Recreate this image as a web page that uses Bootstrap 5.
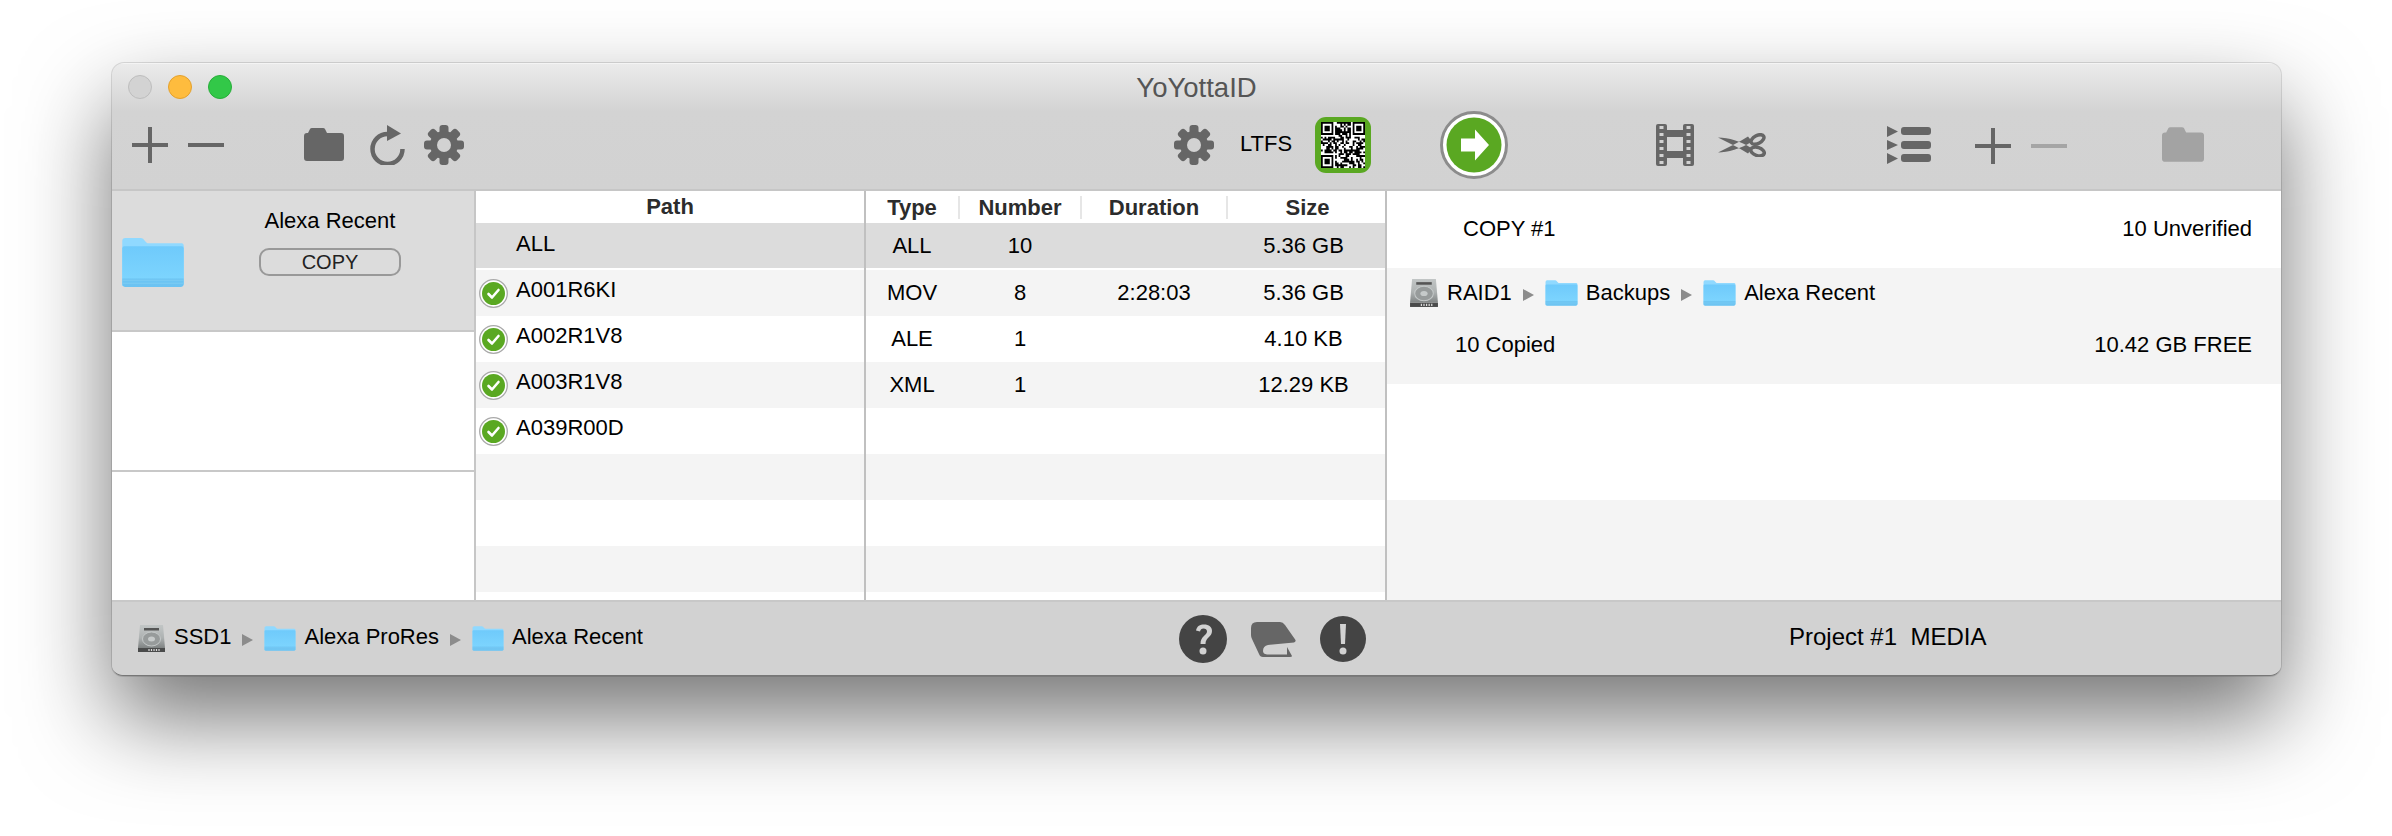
<!doctype html>
<html lang="en">
<head>
<meta charset="utf-8">
<title>YoYottaID</title>
<link href="https://cdn.jsdelivr.net/npm/bootstrap@5.3.0/dist/css/bootstrap.min.css" rel="stylesheet">
<style>
html,body{height:836px;overflow:hidden;background:#fff}
body{font-family:"Liberation Sans",Arial,sans-serif;font-size:22px;color:#000;padding:63px 0 0 112px;line-height:1.2}
.win{width:2169px;height:613px;border-radius:12px 12px 11px 11px;overflow:hidden;background:#d2d2d2;box-shadow:0 42px 90px rgba(0,0,0,.55),0 0 0 1px rgba(0,0,0,.12);border-bottom:1px solid #777}
.chrome{height:128px;background:linear-gradient(#ebebeb,#d3d3d3 48px,#d2d2d2);border-bottom:2px solid #c6c6c6;border-top:1px solid #f4f4f4}
.titlerow{height:46px;display:grid;grid-template-columns:1fr auto 1fr;align-items:center;padding:0 16px}
.wintitle{font-size:27.5px;color:#555}
.light{width:24px;height:24px;border-radius:50%;border:1px solid}
.l1{background:#d3d3d3;border-color:#bdbdbd}.l2{background:#febc3e;border-color:#e3a02e}.l3{background:#32c848;border-color:#28ad3a}
.lights{gap:16px}
.tools{height:79px;padding:0 0 10px 20px}
.tools svg,.bar svg{display:block;flex:none}
.g19{margin-left:19px}.g20{margin-left:20px}.g23{margin-left:23px}.g24{margin-left:24px}.g26{margin-left:26px}.g44{margin-left:44px}.g69{margin-left:69px}.g80{margin-left:80px}.g95{margin-left:95px}.g121{margin-left:121px}.g148{margin-left:148px}.g710{margin-left:710px}
.low{margin-top:3px}
.qrbox{width:56px;height:56px;border-radius:11px;background:#5aa822;padding:5px 6px}
.main{height:409px;background:#fff}
.side{width:364px;border-right:2px solid #c6c6c6;flex:none}
.slot{height:140px;border-bottom:2px solid #c8c8c8;background:#fff}
.slot:last-child{border-bottom:0;flex:1}
.slot.on{height:141px;background:#dcdcdc;padding:17px 0 0 9px}
.slotfolder{margin-top:30px}
.slotbody{width:142px;margin-left:74px}
.slotname{text-align:center;margin-bottom:14px;white-space:nowrap;margin-left:-20px;margin-right:-20px}
.pill{display:block;width:142px;height:28px;padding:0;border:2px solid #999;border-radius:10px;background:transparent;font-size:20px;line-height:24px;color:#222;--bs-btn-hover-bg:transparent}
.pathcol{width:390px;border-right:2px solid #c0c0c0;flex:none}
.statcol{width:521px;border-right:2px solid #c0c0c0;flex:none}
.hd{height:32px;font-weight:700;color:#2c2c2c;font-size:22px}
.rw{height:46px}
.rw.sel{height:45px;background:#dcdcdc;margin-bottom:2px}
.rw.sel.stats{padding-top:2px}
.rw.alt{background:#f4f4f4}
.pathrow{padding:0 0 5px 3px}
.pathrow.sel{padding-bottom:3px}
.pathrow svg{margin-top:5px;flex:none}
.pathtext{margin-left:8px}
.pathtext.noicon{margin-left:37px}
.stats{display:grid;grid-template-columns:94px 122px 146px 159px;align-items:center;text-align:center}
.stats>div{padding-right:2px}
.stats>div:last-child{padding-right:8px}
.hd.stats>div{height:23px;line-height:23px;border-right:2px solid #e6e6e6;padding:0}
.hd.stats>div:last-child{border-right:0}
.rightcol{flex:1;min-width:0}
.rblock{height:77px;padding:0 29px 0 76px}
.rblock.two{height:116px;background:#f4f4f4;padding:0 29px 0 22px;display:flex;flex-direction:column}
.rblock.three{height:116px;background:#fff}
.rblock.four{height:100px;background:#f4f4f4}
.crumbs{height:48px;padding-top:2px}
.copied{padding:16px 0 0 46px}
.crumb-t{margin-left:8px;white-space:nowrap}
.arrow{width:0;height:0;border-left:11px solid #8c8c8c;border-top:6.5px solid transparent;border-bottom:6.5px solid transparent;margin:4px 11px 0 11px;flex:none}
.bar{height:75px;background:#d2d2d2;border-top:2px solid #c8c8c8;padding-left:25px}
.bar-left{width:1042px}
.bar-mid{width:600px;gap:24px;padding-top:1px}
.bar .crumb-t,.project{padding-bottom:3px}
.project{font-size:24px;white-space:nowrap;margin-left:10px}
</style>
</head>
<body>
<svg width="0" height="0" class="d-block" aria-hidden="true">
 <defs>
  <linearGradient id="fg" x1="0" y1="0" x2="0" y2="1"><stop offset="0" stop-color="#6fcafb"/><stop offset=".78" stop-color="#7cd4fe"/><stop offset=".8" stop-color="#6cc5f3"/><stop offset="1" stop-color="#6cc3f2"/></linearGradient>
  <linearGradient id="hg" x1="0" y1="0" x2="0" y2="1"><stop offset="0" stop-color="#c2c6c6"/><stop offset=".55" stop-color="#aeb2b2"/><stop offset="1" stop-color="#7f8383"/></linearGradient>
  <symbol id="folder" viewBox="0 0 61 47">
   <path d="M1 46V3Q1 0 4 0H19Q21 0 23 3L25 5H58Q60 5 60 8V44Q60 46 58 46Z" fill="#90d9ff"/>
   <path d="M1 44V10Q1 8 3 8H58Q60 8 60 10V44Q60 47 57 47H4Q1 47 1 44Z" fill="url(#fg)"/>
   <path d="M1 40.500H60M1 43.500H60" stroke="#84d0f5" stroke-width="1" opacity=".7"/>
  </symbol>
  <symbol id="hdd" viewBox="0 0 29 29">
   <path d="M3 1H26L28 24H1Z" fill="url(#hg)"/>
   <rect x="1" y="24" width="27" height="4" fill="#4a4b4b"/>
   <path d="M7 4H22V6.500H7Z" fill="#555"/>
   <ellipse cx="14.500" cy="15" rx="9" ry="7" fill="#979b9b" stroke="#c4c8c8" stroke-width="1"/>
   <ellipse cx="14.500" cy="15" rx="3.500" ry="2.500" fill="#c6caca"/>
   <path d="M12 25v2M14.500 25v2M17 25v2M19.500 25v2M22 25v2" stroke="#ddd" stroke-width="1.200"/>
  </symbol>
  <symbol id="check" viewBox="0 0 29 29">
   <circle cx="14.500" cy="14.500" r="13.800" fill="#fff" stroke="#a9a9a9" stroke-width="1.300"/>
   <circle cx="14.500" cy="14.500" r="11.500" fill="#5aa822"/>
   <path d="M9.500 15l3.500 3.500 6.500-7.500" fill="none" stroke="#fff" stroke-width="2.600" stroke-linecap="round" stroke-linejoin="round"/>
  </symbol>
  <symbol id="gear" viewBox="0 0 40 40">
   <g fill="#666"><rect x="15.500" y="0" width="9" height="40" rx="3"/><rect x="15.500" y="0" width="9" height="40" rx="3" transform="rotate(45 20 20)"/><rect x="15.500" y="0" width="9" height="40" rx="3" transform="rotate(90 20 20)"/><rect x="15.500" y="0" width="9" height="40" rx="3" transform="rotate(135 20 20)"/></g>
   <circle cx="20" cy="20" r="10.500" fill="none" stroke="#666" stroke-width="7"/>
   <circle cx="20" cy="20" r="7" fill="#d2d2d2"/>
  </symbol>
  <symbol id="plus" viewBox="0 0 36 36"><path d="M16 0h4v16h16v4H20v16h-4V20H0v-4h16z" fill="#666"/></symbol>
  <symbol id="tfolder" viewBox="0 0 40 33"><path d="M0 8Q0 5 3 5H4L6 1Q6.500 0 8 0H19Q20.500 0 21 1L23 5H37Q40 5 40 8V30Q40 33 37 33H3Q0 33 0 30Z"/></symbol>
 </defs>
</svg>

<div class="win d-flex flex-column">
 <div class="chrome">
  <div class="titlerow">
   <div class="d-flex lights"><span class="light l1"></span><span class="light l2"></span><span class="light l3"></span></div>
   <div class="wintitle">YoYottaID</div>
   <div></div>
  </div>
  <div class="tools d-flex align-items-center">
   <svg width="36" height="36"><use href="#plus"/></svg>
   <svg class="g20" width="36" height="4"><rect width="36" height="4" fill="#666"/></svg>
   <svg class="g80" width="40" height="33" fill="#666"><use href="#tfolder"/></svg>
   <svg class="g26" width="35" height="40" viewBox="0 0 35 40"><path d="M17.500 9A15 15 0 1 0 32.500 24" fill="none" stroke="#666" stroke-width="4.500"/><path d="M17 0L31 8.500 17 16Z" fill="#666"/></svg>
   <svg class="g19" width="40" height="40"><use href="#gear"/></svg>
   <svg class="g710" width="40" height="40"><use href="#gear"/></svg>
   <span class="g26">LTFS</span>
   <div class="qrbox g23"><svg id="qr" width="44" height="46" viewBox="0 0 25 25" preserveAspectRatio="none"><rect width="25" height="25" fill="#fff"/><path id="qrp" fill="#000" d=""/></svg></div>
   <svg class="g69" width="68" height="68" viewBox="0 0 68 68"><circle cx="34" cy="34" r="32.500" fill="#fff" stroke="#8c8c8c" stroke-width="3"/><circle cx="34" cy="34" r="27.500" fill="#5aa822"/><path d="M21 27.500H35V18.500L49 34 35 49.500V40.500H21Z" fill="#fff"/></svg>
   <svg class="g148" width="38" height="42" viewBox="0 0 38 42"><g fill="#666"><rect width="11" height="42" rx="2"/><rect x="27" width="11" height="42" rx="2"/><rect x="10" y="6" width="18" height="7"/><rect x="10" y="27" width="18" height="7"/></g><path fill="#d2d2d2" d="M3.500 2h4v3h-4zM3.500 9h4v3h-4zM3.500 16h4v3h-4zM3.500 23h4v3h-4zM3.500 30h4v3h-4zM3.500 37h4v3h-4zM30.500 2h4v3h-4zM30.500 9h4v3h-4zM30.500 16h4v3h-4zM30.500 23h4v3h-4zM30.500 30h4v3h-4zM30.500 37h4v3h-4z"/></svg>
   <svg class="g24" width="48" height="24" viewBox="0 0 48 24"><path d="M0 4.500C11 4.500 22 8 34 15.500L30 20.500C20 14 10 9.500 0 4.500ZM0 19.500C10 19.500 22 16 34 8.500L30 3.500C20 10 10 14.500 0 19.500Z" fill="#666"/><g fill="none" stroke="#666" stroke-width="3.500"><ellipse cx="39.500" cy="6.500" rx="7" ry="4" transform="rotate(-28 39.500 6.500)"/><ellipse cx="39.500" cy="18.500" rx="7" ry="4" transform="rotate(18 39.500 18.500)"/></g></svg>
   <svg class="g121" width="44" height="38" viewBox="0 0 44 38"><g fill="#666"><path d="M0 0L11 5.500 0 11ZM0 14L11 19 0 24ZM0 27L11 32.500 0 38Z"/><rect x="14" y="1" width="30" height="8" rx="3"/><rect x="14" y="15" width="30" height="8" rx="3"/><rect x="14" y="28" width="30" height="8" rx="3"/></g></svg>
   <svg class="g44 low" width="36" height="36"><use href="#plus"/></svg>
   <svg class="g20 low" width="36" height="4"><rect width="36" height="4" fill="#a5a5a5"/></svg>
   <svg class="g95" width="42" height="35" fill="#a3a3a3"><use href="#tfolder"/></svg>
  </div>
 </div>

 <div class="main d-flex">
  <div class="side d-flex flex-column">
   <div class="slot on d-flex">
    <svg class="slotfolder" width="64" height="49"><use href="#folder"/></svg>
    <div class="slotbody">
     <div class="slotname">Alexa Recent</div>
     <button type="button" class="btn pill">COPY</button>
    </div>
   </div>
   <div class="slot"></div>
   <div class="slot"></div>
  </div>

  <div class="pathcol overflow-hidden">
   <div class="hd d-flex align-items-center justify-content-center">Path</div>
   <div class="rw sel pathrow d-flex align-items-center"><span class="pathtext noicon">ALL</span></div>
   <div class="rw alt pathrow d-flex align-items-center"><svg width="29" height="29"><use href="#check"/></svg><span class="pathtext">A001R6KI</span></div>
   <div class="rw pathrow d-flex align-items-center"><svg width="29" height="29"><use href="#check"/></svg><span class="pathtext">A002R1V8</span></div>
   <div class="rw alt pathrow d-flex align-items-center"><svg width="29" height="29"><use href="#check"/></svg><span class="pathtext">A003R1V8</span></div>
   <div class="rw pathrow d-flex align-items-center"><svg width="29" height="29"><use href="#check"/></svg><span class="pathtext">A039R00D</span></div>
   <div class="rw alt"></div>
   <div class="rw"></div>
   <div class="rw alt"></div>
  </div>

  <div class="statcol overflow-hidden">
   <div class="hd stats"><div>Type</div><div>Number</div><div>Duration</div><div>Size</div></div>
   <div class="rw sel stats"><div>ALL</div><div>10</div><div></div><div>5.36 GB</div></div>
   <div class="rw alt stats"><div>MOV</div><div>8</div><div>2:28:03</div><div>5.36 GB</div></div>
   <div class="rw stats"><div>ALE</div><div>1</div><div></div><div>4.10 KB</div></div>
   <div class="rw alt stats"><div>XML</div><div>1</div><div></div><div>12.29 KB</div></div>
   <div class="rw"></div>
   <div class="rw alt"></div>
   <div class="rw"></div>
   <div class="rw alt"></div>
  </div>

  <div class="rightcol">
   <div class="rblock d-flex align-items-center justify-content-between"><span>COPY #1</span><span>10 Unverified</span></div>
   <div class="rblock two">
    <div class="crumbs d-flex align-items-center">
     <svg width="30" height="30"><use href="#hdd"/></svg><span class="crumb-t">RAID1</span><span class="arrow"></span>
     <svg width="33" height="26"><use href="#folder"/></svg><span class="crumb-t">Backups</span><span class="arrow"></span>
     <svg width="33" height="26"><use href="#folder"/></svg><span class="crumb-t">Alexa Recent</span>
    </div>
    <div class="copied d-flex justify-content-between"><span>10 Copied</span><span>10.42 GB FREE</span></div>
   </div>
   <div class="rblock three"></div>
   <div class="rblock four"></div>
  </div>
 </div>

 <div class="bar d-flex align-items-center">
  <div class="bar-left d-flex align-items-center">
   <svg width="29" height="29"><use href="#hdd"/></svg><span class="crumb-t">SSD1</span><span class="arrow"></span>
   <svg width="32" height="25"><use href="#folder"/></svg><span class="crumb-t">Alexa ProRes</span><span class="arrow"></span>
   <svg width="32" height="25"><use href="#folder"/></svg><span class="crumb-t">Alexa Recent</span>
  </div>
  <div class="bar-mid d-flex align-items-center">
   <svg width="48" height="48" viewBox="0 0 48 48"><circle cx="24" cy="24" r="24" fill="#444"/><path d="M17 15.500C18 11 21 9.500 25 9.500 30 9.500 33 12 33 16 33 22 26.500 22.500 26.500 29H21.500C21.500 21 28 20.500 28 16.500 28 14.500 26.500 13.500 24.500 13.500 22.500 13.500 21.500 14.800 21 16.500Z" fill="#d2d2d2"/><circle cx="24" cy="36" r="3.500" fill="#d2d2d2"/></svg>
   <svg width="45" height="37" viewBox="0 0 45 37"><path fill="#666" d="M6 1H29Q32 1 34 4L44.500 19Q45 21 43 21.500L17 24Q12 25 12 30 12 33 16 33.500H36L36 26 41 35Q41 36 39 36H12Q9 36 8 33L1 18Q0 16 0 14V7Q0 1 6 1Z"/></svg>
   <svg width="46" height="46" viewBox="0 0 46 46"><circle cx="23" cy="23" r="23" fill="#444"/><path d="M20 8H26L25 28H21Z" fill="#d2d2d2"/><circle cx="23" cy="35" r="3.500" fill="#d2d2d2"/></svg>
  </div>
  <span class="project">Project #1&nbsp;&nbsp;MEDIA</span>
 </div>
</div>
<script>
(function(){
 var n=25,seed=12345,d='';
 function r(){seed=(seed*1103515245+12345)&0x7fffffff;return (seed>>12)%100;}
 function inF(x,y){return (x<8&&y<8)||(x>=n-8&&y<8)||(x<8&&y>=n-8);}
 for(var y=0;y<n;y++)for(var x=0;x<n;x++){if(!inF(x,y)&&r()<55)d+='M'+x+' '+y+'h1v1h-1z';}
 [[0,0],[n-7,0],[0,n-7]].forEach(function(p){var a=p[0],b=p[1];
  d+='M'+a+' '+b+'h7v1h-7zM'+a+' '+(b+6)+'h7v1h-7zM'+a+' '+b+'h1v7h-1zM'+(a+6)+' '+b+'h1v7h-1zM'+(a+2)+' '+(b+2)+'h3v3h-3z';});
 document.getElementById('qrp').setAttribute('d',d);
})();
</script>
</body>
</html>
